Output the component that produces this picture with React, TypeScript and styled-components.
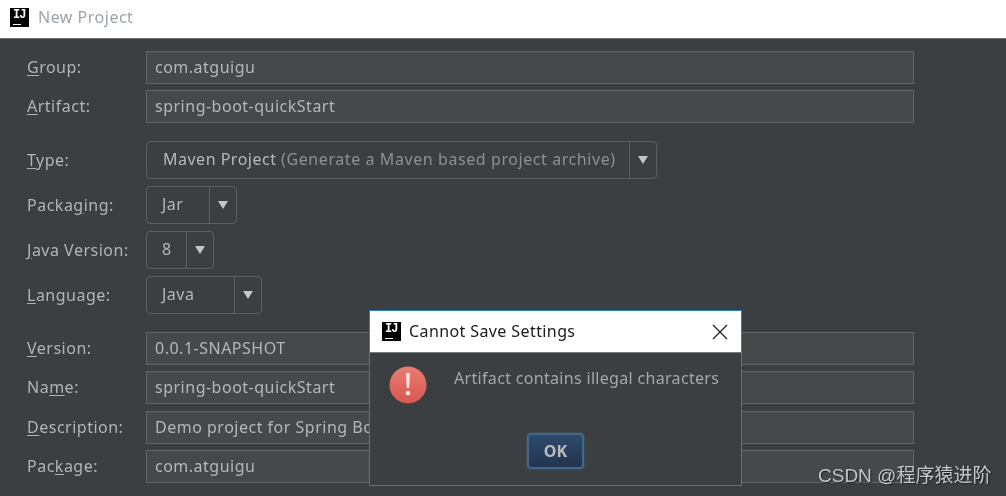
import React from 'react';
import styled, { createGlobalStyle } from 'styled-components';

const GlobalStyle = createGlobalStyle`
  html, body {
    margin: 0;
    padding: 0;
    width: 1006px;
    height: 496px;
    overflow: hidden;
    background: #3c3f41;
  }
`;

const Window = styled.div`
  position: relative;
  width: 1006px;
  height: 496px;
  overflow: hidden;
  background: #3c3f41;
  font-family: 'Noto Sans', 'Open Sans', sans-serif;
  font-size: 16px;
  letter-spacing: 0.5px;
  filter: blur(0.3px);
`;

const TitleBar = styled.div`
  display: flex;
  align-items: center;
  gap: 9px;
  height: 39px;
  padding: 0 0 4px 10px;
  box-sizing: border-box;
  background: #ffffff;
  border-bottom: 1px solid #77797a;
  color: #9ea3a8;
`;

const LogoBox = styled.div`
  position: relative;
  flex: none;
  width: 19px;
  height: 19px;
  background: #000000;
  color: #ffffff;
  font-family: 'Liberation Mono', monospace;
  font-weight: 700;
  font-size: 12px;
  line-height: 15px;
  letter-spacing: -1px;
  padding-left: 3px;
  box-sizing: border-box;

  &::after {
    content: '';
    position: absolute;
    left: 3px;
    bottom: 2px;
    width: 8px;
    height: 1px;
    background: #ffffff;
  }
`;

const Form = styled.div`
  display: flex;
  flex-direction: column;
  padding: 12px 0 0 27px;
`;

const Row = styled.div<{ $top?: number }>`
  display: flex;
  align-items: center;
  margin-top: ${(p) => p.$top ?? 0}px;
`;

const Label = styled.div`
  width: 119px;
  flex: none;
  padding-bottom: 1px;
  color: #b0b5b9;

  u {
    text-underline-offset: 2px;
  }
`;

const TextBox = styled.div`
  width: 768px;
  height: 33px;
  box-sizing: border-box;
  padding-left: 8px;
  background: #45494a;
  border: 1px solid #646464;
  color: #b4b8bb;
  line-height: 30px;
  white-space: nowrap;
  overflow: hidden;
`;

const Select = styled.div<{ $width: number; $pad: number }>`
  display: flex;
  width: ${(p) => p.$width}px;
  height: 38px;
  box-sizing: border-box;
  border: 1px solid #5e6060;
  border-radius: 4px;
  color: #b4b8bb;
  line-height: 35px;
  white-space: nowrap;

  & > span {
    flex: 1;
    padding-left: ${(p) => p.$pad}px;
  }
`;

const Hint = styled.small`
  color: #8c9094;
  font-size: 16px;
  letter-spacing: 0.58px;
`;

const Arrow = styled.div`
  flex: none;
  display: flex;
  align-items: center;
  justify-content: center;
  width: 26px;
  border-left: 1px solid #5e6060;

  &::before {
    content: '';
    border-left: 5.5px solid transparent;
    border-right: 5.5px solid transparent;
    border-top: 8px solid #c4c7c9;
  }
`;

const Dialog = styled.div`
  position: absolute;
  left: 369px;
  top: 310px;
  width: 373px;
  height: 176px;
  box-sizing: border-box;
  display: flex;
  flex-direction: column;
  background: #3c3f41;
  border: 1px solid #2a80c4;
`;

const DialogTitle = styled.div`
  display: flex;
  align-items: center;
  gap: 8px;
  height: 42px;
  flex: none;
  box-sizing: border-box;
  padding: 0 13px 0 12px;
  background: #ffffff;
  border-bottom: 1px solid #77797a;
  color: #1a1a1a;
  letter-spacing: 0.4px;
`;

const TitleText = styled.div`
  flex: 1;
  padding-bottom: 2px;
`;

const DialogBody = styled.div`
  display: flex;
  padding: 13px 0 0 19px;
  height: 80px;
  box-sizing: border-box;
  color: #a3a8ac;
  letter-spacing: 0.32px;
`;

const Message = styled.div`
  margin: 1px 0 0 27px;
`;

const DialogFooter = styled.div`
  display: flex;
  justify-content: center;
`;

const OkButton = styled.button`
  width: 57px;
  height: 36px;
  padding: 0;
  border: 2px solid #43688c;
  border-radius: 4px;
  background: linear-gradient(#2f4a6b, #22344f);
  box-shadow: 0 0 2px #43688c;
  color: #b9bcbf;
  font-family: inherit;
  font-weight: 700;
  font-size: 16px;
`;

const Watermark = styled.div`
  position: absolute;
  left: 818px;
  top: 464px;
  color: #c4c6c8;
  font-family: 'Liberation Sans', 'Noto Sans CJK SC', sans-serif;
  font-size: 19px;
  letter-spacing: 0;
  line-height: 24px;
  text-shadow: 1px 1px 1px #222222;
  white-space: nowrap;
`;

const Logo = () => <LogoBox>IJ</LogoBox>;

const ErrorIcon = () => (
  <svg width="38" height="38" viewBox="0 0 38 38">
    <defs>
      <linearGradient id="err" x1="0" y1="0" x2="0" y2="1">
        <stop offset="0" stopColor="#e87c72" />
        <stop offset="1" stopColor="#d9584e" />
      </linearGradient>
    </defs>
    <circle cx="19" cy="19" r="18.5" fill="url(#err)" />
    <path d="M17 7h4l-.8 15h-2.4z" fill="#fbe4e1" />
    <circle cx="19" cy="27" r="2.3" fill="#fbe4e1" />
  </svg>
);

const CloseIcon = () => (
  <svg width="16" height="16" viewBox="0 0 16 16">
    <path d="M1 1l14 14M15 1L1 15" stroke="#222222" strokeWidth="1.3" fill="none" />
  </svg>
);

export default function App() {
  return (
    <Window>
      <GlobalStyle />
      <TitleBar>
        <Logo />
        New Project
      </TitleBar>
      <Form>
        <Row>
          <Label><u>G</u>roup:</Label>
          <TextBox>com.atguigu</TextBox>
        </Row>
        <Row $top={6}>
          <Label><u>A</u>rtifact:</Label>
          <TextBox>spring-boot-quickStart</TextBox>
        </Row>
        <Row $top={18}>
          <Label><u>T</u>ype:</Label>
          <Select $width={511} $pad={16}>
            <span>Maven Project <Hint>(Generate a Maven based project archive)</Hint></span>
            <Arrow />
          </Select>
        </Row>
        <Row $top={7}>
          <Label>Packa<u>g</u>ing:</Label>
          <Select $width={91} $pad={15}>
            <span>Jar</span>
            <Arrow />
          </Select>
        </Row>
        <Row $top={7}>
          <Label><u>J</u>ava Version:</Label>
          <Select $width={68} $pad={15}>
            <span>8</span>
            <Arrow />
          </Select>
        </Row>
        <Row $top={7}>
          <Label><u>L</u>anguage:</Label>
          <Select $width={116} $pad={15}>
            <span>Java</span>
            <Arrow />
          </Select>
        </Row>
        <Row $top={18}>
          <Label><u>V</u>ersion:</Label>
          <TextBox>0.0.1-SNAPSHOT</TextBox>
        </Row>
        <Row $top={6}>
          <Label>Na<u>m</u>e:</Label>
          <TextBox>spring-boot-quickStart</TextBox>
        </Row>
        <Row $top={7}>
          <Label><u>D</u>escription:</Label>
          <TextBox>Demo project for Spring Boot</TextBox>
        </Row>
        <Row $top={6}>
          <Label>Pac<u>k</u>age:</Label>
          <TextBox>com.atguigu</TextBox>
        </Row>
      </Form>
      <Dialog>
        <DialogTitle>
          <Logo />
          <TitleText>Cannot Save Settings</TitleText>
          <CloseIcon />
        </DialogTitle>
        <DialogBody>
          <ErrorIcon />
          <Message>Artifact contains illegal characters</Message>
        </DialogBody>
        <DialogFooter>
          <OkButton>OK</OkButton>
        </DialogFooter>
      </Dialog>
      <Watermark>CSDN @程序猿进阶</Watermark>
    </Window>
  );
}
